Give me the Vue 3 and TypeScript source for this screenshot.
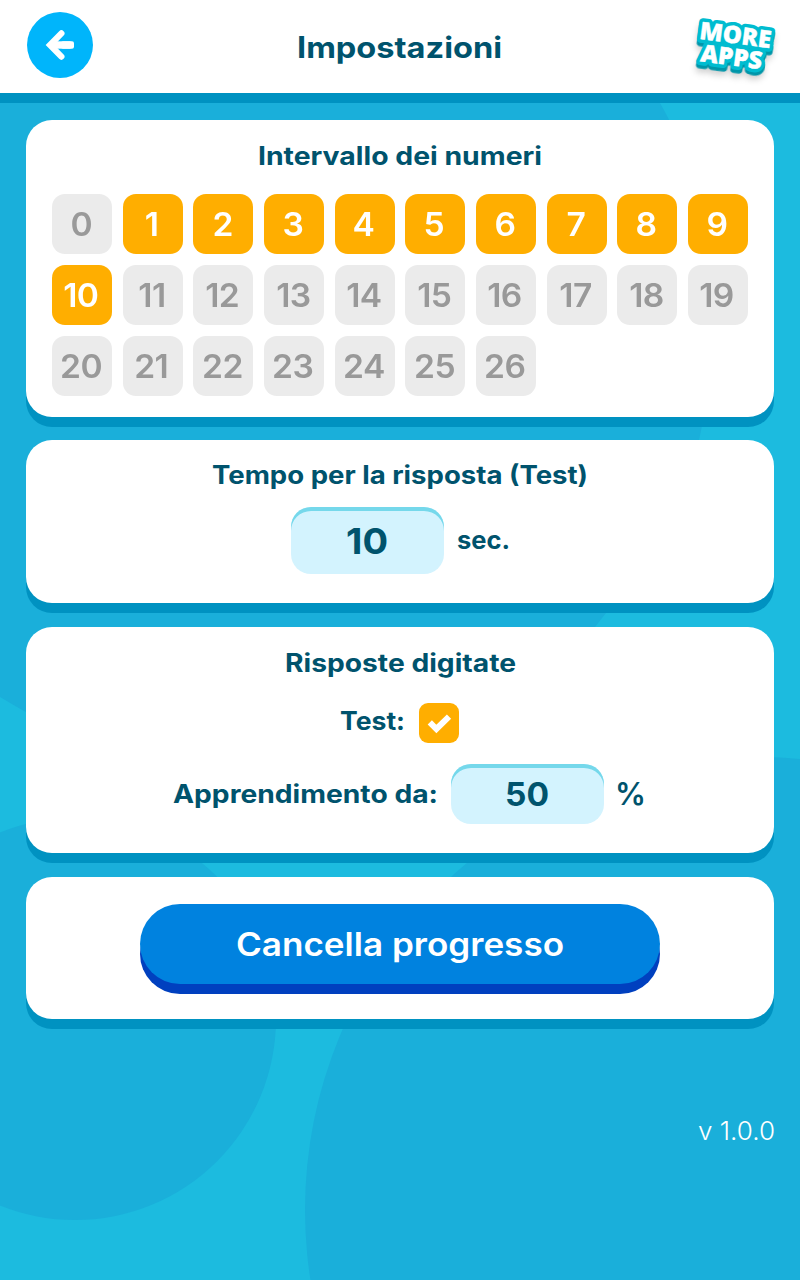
<script setup lang="ts">
import { h, ref } from 'vue'

interface FitProps {
  text: string
  width: number
  size: number
  weight?: number
}

// Text set on one line and fitted to a given advance width
const FitText = (props: FitProps) =>
  h('svg', { width: props.width, height: props.size, style: 'display:block;overflow:visible' }, [
    h(
      'text',
      {
        x: 0,
        y: props.size * 0.86,
        fill: 'currentColor',
        'font-size': props.size,
        'font-weight': props.weight ?? 700,
        textLength: props.width,
        lengthAdjust: 'spacingAndGlyphs',
      },
      props.text,
    ),
  ])
FitText.props = ['text', 'width', 'size', 'weight']

const numbers = Array.from({ length: 27 }, (_, i) => i)
const selected = ref<Set<number>>(new Set([1, 2, 3, 4, 5, 6, 7, 8, 9, 10]))
const typedTest = ref(true)

// The logo is painted in three layers: extruded side, coloured edge, white face
const logoLayers = ['side', 'edge', 'face']

function toggle(n: number) {
  const next = new Set(selected.value)
  if (next.has(n)) next.delete(n)
  else next.add(n)
  selected.value = next
}
</script>

<template>
  <div class="page">
    <svg class="backdrop" width="800" height="1280" viewBox="0 0 800 1280" aria-hidden="true">
      <path
        d="M0 0H600L660 103C710 190 729 310 699 440C682 514 650 562 606 613L595 627C430 810 190 815 0 697Z"
      />
      <circle cx="75" cy="1019" r="201" />
      <circle cx="758" cy="1210" r="453" />
    </svg>

    <header class="header">
      <button class="back" aria-label="Indietro">
        <svg width="66" height="66" viewBox="0 0 66 66" fill="none" stroke="#fff">
          <path d="M34.4 21.4L23 33L34.4 44.6" stroke-width="6.2" stroke-linecap="round" />
          <path d="M24 33H43.6" stroke-width="7.4" />
          <rect x="34" y="29.3" width="13" height="7.4" rx="2" fill="#fff" stroke="none" />
        </svg>
      </button>
      <h1 class="title"><FitText text="Impostazioni" :width="205" :size="29.5" /></h1>
      <svg class="more" width="90" height="76" viewBox="690 8 90 76">
        <g transform="rotate(7.5 735 46)" class="logo">
          <g v-for="layer in logoLayers" :key="layer" :class="`logo-${layer}`">
            <text x="699" y="43.5" textLength="72" lengthAdjust="spacingAndGlyphs">MORE</text>
            <text x="703" y="65.5" textLength="62" lengthAdjust="spacingAndGlyphs">APPS</text>
          </g>
        </g>
      </svg>
    </header>

    <main class="cards">
      <section class="card range">
        <h2><FitText text="Intervallo dei numeri" :width="284" :size="25.2" /></h2>
        <div class="grid">
          <button
            v-for="n in numbers"
            :key="n"
            class="num"
            :class="{ on: selected.has(n) }"
            @click="toggle(n)"
          >
            <span>{{ n }}</span>
          </button>
        </div>
      </section>

      <section class="card time">
        <h2><FitText text="Tempo per la risposta (Test)" :width="376" :size="25.2" /></h2>
        <div class="row">
          <div class="field tall"><FitText text="10" :width="42" :size="36" /></div>
          <FitText class="unit" text="sec." :width="53" :size="25.2" />
        </div>
      </section>

      <section class="card typed">
        <h2><FitText text="Risposte digitate" :width="231" :size="25.2" /></h2>
        <div class="row check-row">
          <FitText class="check-label" text="Test:" :width="65" :size="25.2" />
          <button class="check" :class="{ on: typedTest }" @click="typedTest = !typedTest">
            <svg v-if="typedTest" width="40" height="40" viewBox="0 0 40 40" fill="none">
              <path d="M10.8 19.4L17.4 26L30 13.6" stroke="#fff" stroke-width="6" />
            </svg>
          </button>
        </div>
        <div class="row learn-row">
          <FitText class="learn-label" text="Apprendimento da:" :width="265" :size="25.2" />
          <div class="field"><FitText text="50" :width="44" :size="32" /></div>
          <FitText class="percent" text="%" :width="31" :size="31" :weight="600" />
        </div>
      </section>

      <section class="card reset">
        <button class="primary">
          <FitText text="Cancella progresso" :width="328" :size="32" :weight="600" />
        </button>
      </section>
    </main>

    <footer class="version"><FitText text="v 1.0.0" :width="77" :size="25.2" :weight="350" /></footer>
  </div>
</template>

<style>
body {
  margin: 0;
}
</style>

<style scoped>
.page {
  position: relative;
  width: 800px;
  height: 1280px;
  overflow: hidden;
  background: #1cbbdf;
  color: #00536d;
  font-family: Inter, "Open Sans", sans-serif;
}
.backdrop {
  position: absolute;
  inset: 0;
  fill: #1aafda;
}
button {
  border: 0;
  padding: 0;
  margin: 0;
  font: inherit;
  color: inherit;
}
h1,
h2 {
  margin: 0;
  font-size: inherit;
}
.header {
  position: relative;
  box-sizing: border-box;
  display: grid;
  grid-template-columns: 93px 1fr 93px;
  justify-items: center;
  height: 93.3px;
  background: #fff;
  box-shadow: 0 10px 0 #0092c1;
}
.back {
  width: 66px;
  height: 66px;
  margin: 12px 0 0 27px;
  border-radius: 50%;
  background: #00b5fb;
}
.back svg {
  display: block;
}
.title {
  margin: 32.6px 1.5px 0 0;
}
.more {
  justify-self: start;
  margin: 8px 0 0 -18px;
  overflow: visible;
}
.logo {
  font-family: "Open Sans", Lato, sans-serif;
  font-weight: 800;
  font-size: 24px;
  stroke-linejoin: round;
}
.logo-side {
  fill: #0096a9;
  stroke: #0096a9;
  stroke-width: 7.5px;
  transform: translate(0.5px, 4px);
  filter: drop-shadow(0 4px 3px rgba(0, 0, 0, 0.18));
}
.logo-edge {
  fill: #00bcd0;
  stroke: #00bcd0;
  stroke-width: 7.5px;
}
.logo-face {
  fill: #fff;
  stroke: #fff;
  stroke-width: 0.4px;
}
.cards {
  position: relative;
  display: flex;
  flex-direction: column;
  padding: 26.7px 26px 0;
}
.card {
  box-sizing: border-box;
  display: flex;
  flex-direction: column;
  align-items: center;
  border-radius: 26px;
  background: #fff;
  box-shadow: 0 10px 0 #0092c1;
}
.range {
  height: 297px;
  padding: 23px 26px 0;
}
.grid {
  align-self: stretch;
  display: grid;
  grid-template-columns: repeat(10, 60px);
  justify-content: space-between;
  row-gap: 11px;
  margin-top: 25.8px;
}
.num {
  box-sizing: border-box;
  display: flex;
  align-items: center;
  justify-content: center;
  height: 60px;
  padding: 2px 2px 0 0;
  border-radius: 13px;
  background: #ebebeb;
  color: #999;
  font-size: 32px;
  font-weight: 600;
  line-height: 1;
  letter-spacing: -0.5px;
}
.num span {
  transform: scaleX(1.05);
}
.num.on {
  background: #ffae00;
  color: #fff;
}
.time {
  height: 163px;
  margin-top: 23px;
  padding-top: 22.5px;
}
.row {
  display: flex;
  align-items: flex-start;
}
.field {
  box-sizing: border-box;
  display: flex;
  justify-content: center;
  width: 153px;
  height: 60px;
  padding-top: 14.5px;
  border-radius: 20px;
  background: #d3f3fe;
  box-shadow: inset 0 4px 0 #75d8eb;
}
.field.tall {
  height: 67px;
  padding-top: 16.5px;
}
.time .row {
  margin: 19.3px 0 0 1px;
}
.unit {
  margin: 20.5px 0 0 13.5px;
}
.typed {
  height: 226px;
  margin-top: 24px;
  padding-top: 23px;
}
.check-row {
  margin: 27.8px 2px 0 0;
}
.check-label {
  margin: 5px 14px 0 0;
}
.check {
  width: 40px;
  height: 40px;
  border-radius: 9px;
  background: #ebebeb;
}
.check.on {
  background: #ffae00;
}
.check svg {
  display: block;
}
.learn-row {
  margin: 21px 0 0 19px;
}
.learn-label {
  margin: 17px 13px 0 0;
}
.percent {
  margin: 14.5px 0 0 11.5px;
}
.reset {
  height: 142px;
  margin-top: 24px;
  padding-top: 27px;
}
.primary {
  box-sizing: border-box;
  display: flex;
  justify-content: center;
  width: 520px;
  height: 80px;
  padding-top: 24.2px;
  border-radius: 40px;
  background: #0082df;
  box-shadow: 0 10px 0 #0040bf;
  color: #fff;
}
.version {
  position: relative;
  display: flex;
  justify-content: flex-end;
  margin-top: 99px;
  padding-right: 25.5px;
  color: #fff;
}
</style>
